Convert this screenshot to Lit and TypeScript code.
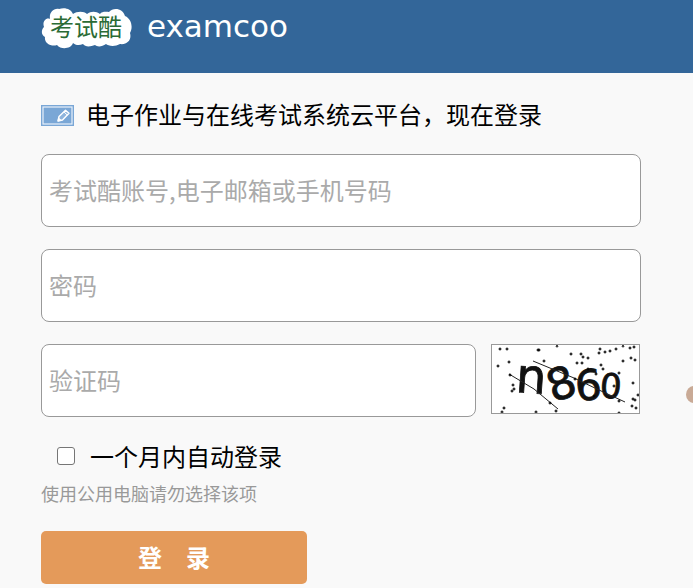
import { LitElement, css, html, svg } from "lit";
import { customElement, state } from "lit/decorators.js";

const SPECKS: [number, number][] = [
  [8, 4], [15, 4], [46, 5], [47, 5], [79, 9], [89, 9], [91, 12], [96, 13], [107, 8], [108, 4],
  [113, 7], [118, 6], [124, 4], [131, 1], [138, 3], [142, 2], [131, 16], [139, 13], [143, 15], [52, 16],
  [85, 18], [90, 18], [109, 20], [111, 24], [6, 21], [17, 17], [18, 30], [21, 40], [22, 44], [20, 46],
  [127, 28], [141, 38], [141, 54], [143, 55], [140, 61], [144, 63], [127, 56], [12, 63], [10, 67], [44, 67],
  [58, 58], [64, 66], [146, 50], [122, 41], [102, 51], [83, 34], [65, 1], [127, 68], [96, 24], [104, 29],
];

@customElement("exam-logo")
export class ExamLogo extends LitElement {
  static styles = css`
    :host { display: block; }
    .row { display: flex; align-items: center; gap: 15px; }
    .mark { display: block; width: 91px; height: 42px; flex: none; }
    .cloud { fill: #fff; }
    .name { fill: #2b6b35; font: 24px "Noto Sans CJK SC", sans-serif; }
    .word { color: #fff; font: 31px/36px "DejaVu Sans", sans-serif; padding-bottom: 4px; }
  `;

  render() {
    return html`
      <div class="row">
        <svg class="mark" viewBox="0 0 91 42" role="img" aria-label="考试酷">
          <path class="cloud" d="M3 20C1 15 5 10 9 12C8 6 12 1 18 2C24 0 30 2 32 7C36 4 43 4 46 7C50 4 55 4 59 7C61 4 66 5 68 5C72 0 82 1 84 9C91 12 92 21 89 26C91 33 86 38 79 37C74 40 67 39 65 37C61 40 56 40 54 38C49 40 44 40 42 37C38 39 34 38 32 36C30 42 20 43 16 38C10 40 3 36 4 30C0 28 0 23 3 20Z"/>
          <text class="name" x="9" y="29">考试酷</text>
        </svg>
        <span class="word">examcoo</span>
      </div>
    `;
  }
}

@customElement("captcha-image")
export class CaptchaImage extends LitElement {
  static styles = css`
    :host { display: block; flex: none; }
    .box { display: block; width: 147px; height: 68px; border: 1px solid #999; background: #fff; }
    .glyph { fill: #111; stroke: #111; stroke-width: 0.8; font-family: "DejaVu Sans", sans-serif; }
    .big { font-size: 48px; }
    .mid { font-size: 44px; }
    .six { font-size: 42px; }
    .low { font-size: 34px; }
    .line { stroke: #222; stroke-width: 1; fill: none; }
    .speck { fill: #000; }
  `;

  render() {
    return html`
      <svg class="box" viewBox="0 0 147 68" role="img" aria-label="验证码图片">
        <text class="glyph big" x="24" y="48" transform="rotate(4 39 34)">n</text>
        <text class="glyph mid" x="55" y="54" transform="rotate(-20 69 38)">8</text>
        <text class="glyph six" x="83" y="55" transform="rotate(-4 96 41)">6</text>
        <text class="glyph low" x="108" y="53" transform="rotate(4 119 41)">0</text>
        <path class="line" d="M17 29L42 44L66 64M41 16L82 33L107 45L133 57"/>
        ${SPECKS.map(([x, y]) => svg`<path class="speck" d="M${x - 2} ${y}l2 -1l2 1l-2 1zM${x} ${y - 2}l1 2l-1 2l-1 -2z"/>`)}
      </svg>
    `;
  }
}

@customElement("app-root")
export class AppRoot extends LitElement {
  @state() private remember = false;

  static styles = css`
    :host {
      display: block;
      position: relative;
      overflow: hidden;
      min-height: 100vh;
      background: #f9f9f9;
      color: #000;
      font: 24px/36px "Noto Sans CJK SC", sans-serif;
    }
    * { box-sizing: border-box; }
    .top { background: #336699; padding: 7px 41px 24px; }
    .login { padding: 24px 52px 4px 41px; }
    .title { display: flex; align-items: center; gap: 12px; margin: 0 0 21px; font-size: 24px; font-weight: 400; }
    .title span { padding-bottom: 2px; line-height: 34px; }
    .icon { display: block; width: 33px; height: 21px; flex: none; }
    .fields { display: flex; flex-direction: column; gap: 22px; }
    .check { display: flex; align-items: flex-start; gap: 15px; padding-right: 1px; }
    .field {
      display: block;
      width: 100%;
      min-width: 0;
      height: 73px;
      padding: 0 7px 2px;
      border: 1px solid #999;
      border-radius: 8px;
      background: #fff;
      color: #000;
      font: inherit;
    }
    .field::placeholder { color: #aaa; opacity: 1; }
    .remember { display: flex; align-items: center; gap: 15px; margin: 21px 0 0 16px; }
    .tick {
      appearance: none;
      width: 18px;
      height: 18px;
      margin: 0;
      border: 1px solid #767676;
      border-radius: 3px;
      background: #fff;
    }
    .tick:checked { background: #336699; }
    .hint { margin: 6px 0 25px; color: #999; font-size: 18px; line-height: 26px; }
    .submit {
      display: block;
      width: 266px;
      max-width: 100%;
      height: 53px;
      padding: 0 0 2px;
      border: 0;
      border-radius: 5px;
      background: #e49a5a;
      color: #fff;
      font: bold 24px/36px "Noto Sans CJK SC", sans-serif;
    }
    .peek {
      position: absolute;
      right: -9px;
      top: 386px;
      width: 16px;
      height: 17px;
      border-radius: 50%;
      background: #c9aa96;
    }
  `;

  private toggle(e: Event) {
    this.remember = (e.target as HTMLInputElement).checked;
  }

  render() {
    return html`
      <header class="top"><exam-logo></exam-logo></header>
      <form class="login" @submit=${(e: Event) => e.preventDefault()}>
        <h1 class="title">
          <svg class="icon" viewBox="0 0 33 21" aria-hidden="true">
            <rect width="33" height="21" fill="#7aa7d6"/>
            <rect x="2" y="2" width="29" height="17" fill="none" stroke="#e8f1fa" stroke-width="1.2"/>
            <path d="M17 16L18 11.5L24.5 5.2L28 8.2L21.5 15Z" fill="#8fb5dd" stroke="#fff" stroke-width="1.4" stroke-linejoin="round"/>
            <path d="M23 7L26.3 10M17 16L20 15.3L17.6 13Z" fill="#fff" stroke="#fff"/>
          </svg>
          <span>电子作业与在线考试系统云平台，现在登录</span>
        </h1>
        <div class="fields">
          <input class="field" type="text" aria-label="账号" placeholder="考试酷账号,电子邮箱或手机号码">
          <input class="field" type="password" aria-label="密码" placeholder="密码">
          <div class="check">
            <input class="field" type="text" aria-label="验证码" placeholder="验证码">
            <captcha-image></captcha-image>
          </div>
        </div>
        <div class="remember">
          <input class="tick" id="remember" type="checkbox" .checked=${this.remember} @change=${this.toggle}>
          <label for="remember">一个月内自动登录</label>
        </div>
        <p class="hint">使用公用电脑请勿选择该项</p>
        <button class="submit" type="submit">登　录</button>
      </form>
      <span class="peek"></span>
    `;
  }
}
